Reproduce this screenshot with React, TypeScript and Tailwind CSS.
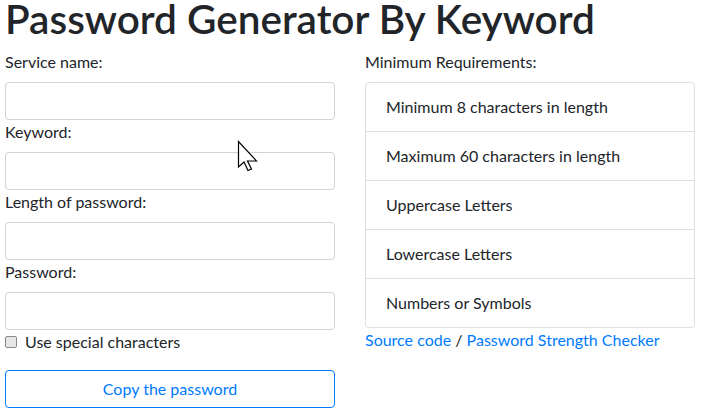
import React from "react";

const font = { fontFamily: "Lato, 'Liberation Sans', sans-serif" };

const fields = ["Service name:", "Keyword:", "Length of password:", "Password:"];

const requirements = [
  "Minimum 8 characters in length",
  "Maximum 60 characters in length",
  "Uppercase Letters",
  "Lowercase Letters",
  "Numbers or Symbols",
];

function Cursor() {
  return (
    <svg
      className="absolute left-[237px] top-[140px] pointer-events-none"
      width="22"
      height="32"
      viewBox="0 0 22 32"
    >
      <path
        d="M1.5 1.5 L1.5 27 L7 22 L11 30.5 L14.5 29 L10.5 21 L19.5 21 Z"
        fill="#fff"
        stroke="#000"
        strokeWidth="1.2"
        strokeLinejoin="miter"
      />
    </svg>
  );
}

export default function App() {
  return (
    <div
      className="relative min-h-[415px] w-[704px] bg-white px-[5px] text-[16px] text-[#212529]"
      style={font}
    >
      <h1 className="h-[50px] text-[40.5px] font-semibold leading-[38px]">
        Password Generator By Keyword
      </h1>

      <div className="grid w-[690px] grid-cols-2 gap-[30px]">
        <form className="flex flex-col" onSubmit={(e) => e.preventDefault()}>
          {fields.map((f) => (
            <label key={f} className="flex flex-col">
              <span className="mb-2 leading-6">{f}</span>
              <input
                type="text"
                className="h-[38px] w-full rounded-[4px] border border-[#ced4da] bg-white px-3 outline-none"
              />
            </label>
          ))}
          <label className="flex h-6 items-center leading-6">
            <input
              type="checkbox"
              className="h-[12px] w-[12px] appearance-none rounded-[2px] border border-[#8a8a8a] bg-[#e6e6e6]"
            />
            <span className="ml-[8px]">Use special characters</span>
          </label>
          <button
            type="button"
            className="mt-4 h-[38px] w-full rounded-[4px] border border-[#007bff] bg-white text-[#007bff]"
          >
            Copy the password
          </button>
        </form>

        <div className="flex flex-col">
          <span className="mb-2 leading-6">Minimum Requirements:</span>
          <ul className="rounded-[4px] border border-[#dfdfdf]">
            {requirements.map((r, i) => (
              <li
                key={r}
                className={
                  i < requirements.length - 1
                    ? "border-b border-[#dfdfdf] px-5 py-3 leading-6"
                    : "px-5 py-3 leading-6"
                }
              >
                {r}
              </li>
            ))}
          </ul>
          <p className="leading-6">
            <a href="#" className="text-[#007bff]">
              Source code
            </a>{" "}
            /{" "}
            <a href="#" className="text-[#007bff]">
              Password Strength Checker
            </a>
          </p>
        </div>
      </div>

      <Cursor />
    </div>
  );
}
